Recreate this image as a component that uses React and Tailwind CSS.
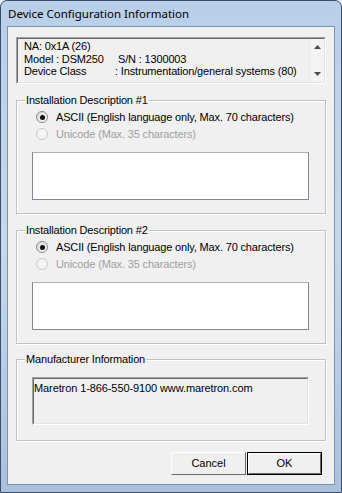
import React from "react";

const ui = { fontFamily: '"Liberation Sans", Arial, sans-serif' };

function Radio({ checked, disabled, label }) {
  return (
    <div className="flex items-center h-[16px]">
      <span
        className={
          "w-[12px] h-[12px] rounded-full border flex items-center justify-center " +
          (disabled
            ? "border-[#c9c9c9] bg-[#f4f4f4]"
            : "border-[#8a8a8a] bg-gradient-to-br from-[#d8d8d8] to-[#fbfbfb]")
        }
      >
        {checked && <span className="w-[5px] h-[5px] rounded-full bg-[#111]" />}
      </span>
      <span
        className={
          "ml-[8px] text-[11px] leading-none tracking-[-0.16px] " +
          (disabled ? "text-[#a0a0a0]" : "text-black")
        }
      >
        {label}
      </span>
    </div>
  );
}

function Group({ title, children, className = "" }) {
  return (
    <div
      className={
        "border border-[#c2c2c2] shadow-[inset_1px_1px_0_#fff,1px_1px_0_#fff] " + className
      }
    >
      <div className="-mt-[7px] ml-[8px] h-[13px] flex">
        <span className="bg-[#f0f0f0] px-[1px] text-[11px] leading-[13px] tracking-[-0.16px] text-black">
          {title}
        </span>
      </div>
      {children}
    </div>
  );
}

function Description({ title }) {
  return (
    <Group title={title} className="h-[114px]">
      <div className="ml-[19px] mt-[2px] flex flex-col gap-[1px]">
        <Radio checked label="ASCII (English language only, Max. 70 characters)" />
        <Radio disabled label="Unicode (Max. 35 characters)" />
      </div>
      <div className="ml-[15px] mt-[10px] w-[277px] h-[48px] bg-white border border-[#828790] border-t-[#abadb3]" />
    </Group>
  );
}

function Button({ children, primary }) {
  return (
    <div className={"w-[75px] h-[23px] " + (primary ? "border border-black" : "")}>
      <div className="w-full h-full border border-t-white border-l-white border-r-[#696969] border-b-[#696969] bg-[#f0f0f0] flex items-center justify-center text-[11px] text-black">
        {children}
      </div>
    </div>
  );
}

export default function App() {
  return (
    <div className="w-[342px] h-[493px] bg-[#f0f0f0]">
      <div className="w-full h-full rounded-t-[7px] border border-[#3b4f6b] bg-gradient-to-b from-[#b9cfe8] via-[#c6d8ec] to-[#a9c1dd] flex flex-col">
        <div className="h-[25px] flex items-center pl-[7px]">
          <span
            className="text-[11.5px] text-black"
            style={{ fontFamily: '"Noto Sans", "Open Sans", sans-serif' }}
          >
            Device Configuration Information
          </span>
        </div>
        <div
          className="mx-[6px] h-[459px] bg-[#f0f0f0] border border-[#7b93b3] flex flex-col px-[8px]"
          style={ui}
        >
          <div className="mt-[10px] h-[47px] border border-[#a0a0a0] border-r-white border-b-white flex">
            <div className="flex-1 border border-[#696969] border-r-[#e3e3e3] border-b-[#e3e3e3] flex">
              <div className="flex-1 pl-[6px] pt-[1px] text-[11px] leading-[12.5px] tracking-[-0.16px] text-black">
                <div>NA: 0x1A (26)</div>
                <div className="flex">
                  <span className="w-[94px]">Model : DSM250</span>
                  <span>S/N : 1300003</span>
                </div>
                <div className="flex">
                  <span className="w-[91px]">Device Class</span>
                  <span>: Instrumentation/general systems (80)</span>
                </div>
              </div>
              <div className="w-[15px] border-l border-[#e6e6e6] bg-[#f3f3f3] flex flex-col justify-between items-center py-[6px]">
                <svg width="7" height="4" viewBox="0 0 7 4">
                  <path d="M0 4 L3.5 0 L7 4 Z" fill="#4d4d4d" />
                </svg>
                <svg width="7" height="4" viewBox="0 0 7 4">
                  <path d="M0 0 L7 0 L3.5 4 Z" fill="#4d4d4d" />
                </svg>
              </div>
            </div>
          </div>

          <div className="mt-[16px]">
            <Description title="Installation Description #1" />
          </div>
          <div className="mt-[16px]">
            <Description title="Installation Description #2" />
          </div>

          <div className="mt-[15px]">
            <Group title="Manufacturer Information" className="h-[82px]">
              <div className="ml-[15px] mt-[11px] w-[277px] h-[48px] border border-[#a0a0a0] border-r-white border-b-white">
                <div className="w-full h-full border border-[#696969] border-r-[#e3e3e3] border-b-[#e3e3e3] bg-[#f0f0f0] pt-[3px] text-[11px] leading-[13px] tracking-[-0.1px] text-black">
                  Maretron 1-866-550-9100 www.maretron.com
                </div>
              </div>
            </Group>
          </div>

          <div className="mt-[11px] flex justify-end gap-[1px] pr-[4px]">
            <Button>Cancel</Button>
            <Button primary>OK</Button>
          </div>
        </div>
      </div>
    </div>
  );
}
